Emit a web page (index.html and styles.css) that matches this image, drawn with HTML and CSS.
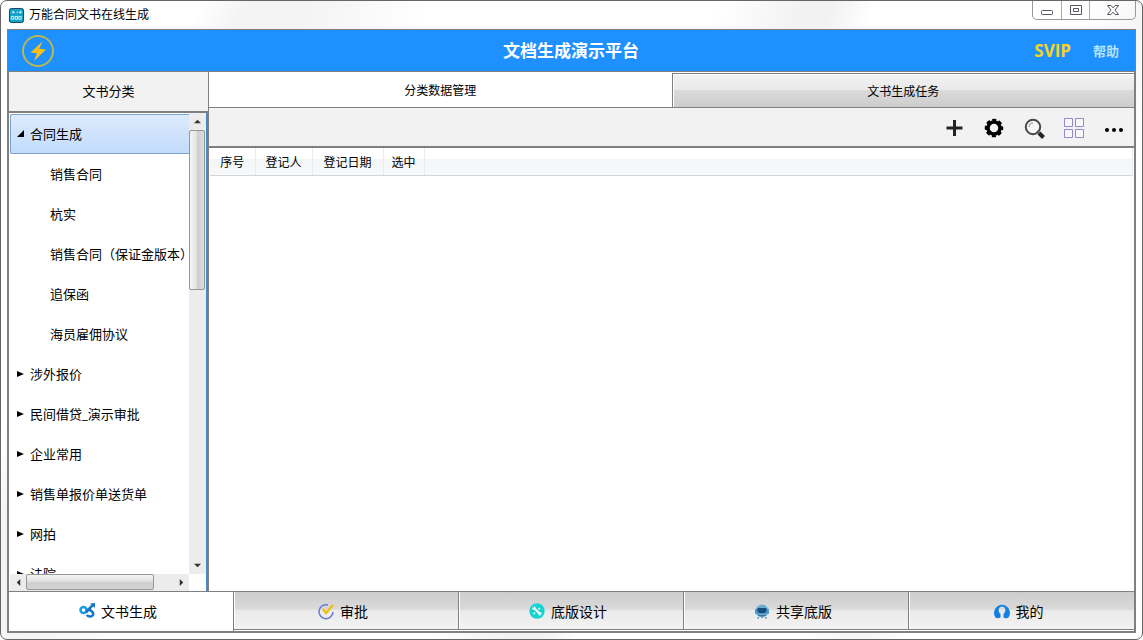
FILE: index.html
```html
<!DOCTYPE html>
<html lang="zh-CN">
<head>
<meta charset="utf-8">
<title>万能合同文书在线生成</title>
<link rel="stylesheet" href="styles.css">
</head>
<body>
<div class="window">
  <div class="titlebar">
    <svg class="app-icon" viewBox="0 0 16 16"><rect x=".5" y=".5" width="15" height="15" rx="2" fill="#12a0c8" stroke="#143f55"/><path d="M3 4.500h3M4.500 3v3M8 4.500h2M12 3v3M11 4.500h3" stroke="#d9f6ff"/><path d="M2.500 9h2.500v3h-2.500zM6.500 9h2.500v3h-2.500zM10.500 9h2.500v3h-2.500z" fill="none" stroke="#d9f6ff"/></svg>
    <span class="caption">万能合同文书在线生成</span>
    <div class="controls">
      <button class="control" aria-label="最小化"><svg viewBox="0 0 14 12"><rect x="1.500" y="6.500" width="11" height="4" rx="1" fill="#fff" stroke="#555663"/></svg></button>
      <button class="control" aria-label="最大化"><svg viewBox="0 0 14 12"><path d="M1.500 1.500h11v9h-11zM4.500 4.500h5v3h-5z" fill="#fff" stroke="#555663"/></svg></button>
      <button class="control control-close" aria-label="关闭"><svg viewBox="0 0 14 12"><path d="M1.500 1.500h3.500l2 2.300 2-2.300h3.500L9 6l3.500 4.500H9L7 8.200l-2 2.300H1.500L5 6z" fill="#fff" stroke="#555663"/></svg></button>
    </div>
  </div>
  <div class="client">
    <header class="banner">
      <svg class="bolt" viewBox="0 0 34 34"><circle cx="17" cy="17" r="15" fill="none" stroke="#b9b653" stroke-width="2"/><path d="M21.500 7.500 9.500 18.500l6.500.7-3 7.800 12-11.500-6.800-.8z" fill="#fbbf16"/></svg>
      <h1 class="banner-title">文档生成演示平台</h1>
      <a class="svip" href="#">SVIP</a>
      <a class="help" href="#">帮助</a>
    </header>
    <div class="body">
      <aside class="sidebar">
        <h2 class="sidebar-title">文书分类</h2>
        <div class="tree-pane">
          <ul class="tree">
            <li><button class="node selected"><svg class="arrow" viewBox="0 0 8 8"><path d="M7 1v7H0z"/></svg>合同生成</button>
              <ul class="children">
                <li><button class="node leaf">销售合同</button></li>
                <li><button class="node leaf">杭实</button></li>
                <li><button class="node leaf">销售合同（保证金版本）</button></li>
                <li><button class="node leaf">追保函</button></li>
                <li><button class="node leaf">海员雇佣协议</button></li>
              </ul>
            </li>
            <li><button class="node"><svg class="arrow" viewBox="0 0 8 8"><path d="M0 2l7 3-7 3z"/></svg>涉外报价</button></li>
            <li><button class="node"><svg class="arrow" viewBox="0 0 8 8"><path d="M0 2l7 3-7 3z"/></svg>民间借贷_演示审批</button></li>
            <li><button class="node"><svg class="arrow" viewBox="0 0 8 8"><path d="M0 2l7 3-7 3z"/></svg>企业常用</button></li>
            <li><button class="node"><svg class="arrow" viewBox="0 0 8 8"><path d="M0 2l7 3-7 3z"/></svg>销售单报价单送货单</button></li>
            <li><button class="node"><svg class="arrow" viewBox="0 0 8 8"><path d="M0 2l7 3-7 3z"/></svg>网拍</button></li>
            <li><button class="node"><svg class="arrow" viewBox="0 0 8 8"><path d="M0 2l7 3-7 3z"/></svg>法院</button></li>
          </ul>
          <div class="vbar">
            <button class="step" aria-label="向上滚动"><svg viewBox="0 0 8 8"><path d="M0 6l4-4 4 4z"/></svg></button>
            <div class="vtrack"><div class="vthumb"></div></div>
            <button class="step" aria-label="向下滚动"><svg viewBox="0 0 8 8"><path d="M0 2l4 4 4-4z"/></svg></button>
          </div>
          <div class="hbar">
            <button class="step" aria-label="向左滚动"><svg viewBox="0 0 8 8"><path d="M6 0L2 4l4 4z"/></svg></button>
            <div class="htrack"><div class="hthumb"></div></div>
            <button class="step" aria-label="向右滚动"><svg viewBox="0 0 8 8"><path d="M2 0l4 4-4 4z"/></svg></button>
          </div>
        </div>
      </aside>
      <main class="main">
        <div class="tabs" role="tablist">
          <button class="tab active" role="tab" aria-selected="true">分类数据管理</button>
          <button class="tab" role="tab" aria-selected="false">文书生成任务</button>
        </div>
        <div class="toolbar">
          <button class="tool" aria-label="新增"><svg viewBox="0 0 24 24"><path d="M12.500 4v16M4.500 12h16" stroke="#222" stroke-width="3"/></svg></button>
          <button class="tool" aria-label="设置"><svg viewBox="0 0 24 24"><circle cx="12" cy="12" r="6" fill="none" stroke="#000" stroke-width="3.500"/><circle cx="12" cy="12" r="8" fill="none" stroke="#000" stroke-width="2.500" stroke-dasharray="3.900 2.383" stroke-dashoffset="1.950"/></svg></button>
          <button class="tool" aria-label="搜索"><svg viewBox="0 0 24 24"><circle cx="11" cy="11" r="7.200" fill="#f8f8f8" stroke="#484848" stroke-width="2"/><path d="M7 11a4 4 0 0 1 4-4" fill="none" stroke="#aaa" stroke-width="1.500"/><path d="M15 15l2 2" stroke="#555" stroke-width="2"/><path d="M17 17l4.500 4.500" stroke="#222" stroke-width="4"/></svg></button>
          <button class="tool" aria-label="网格视图"><svg viewBox="0 0 24 24"><path d="M2.500 2.500h8v8h-8zM13.500 2.500h8v8h-8zM2.500 13.500h8v8h-8zM13.500 13.500h8v8h-8z" fill="#f8f6ff" stroke="#9488cf"/></svg></button>
          <button class="tool" aria-label="更多"><svg viewBox="0 0 24 24"><circle cx="5" cy="14" r="2"/><circle cx="12" cy="14" r="2"/><circle cx="19" cy="14" r="2"/></svg></button>
        </div>
        <div class="grid-pane">
          <table class="grid">
            <thead><tr><th class="col-no">序号</th><th class="col-user">登记人</th><th class="col-date">登记日期</th><th class="col-pick">选中</th><th></th></tr></thead>
          </table>
        </div>
      </main>
    </div>
    <nav class="nav">
      <button class="nav-item current"><svg viewBox="0 0 16 16"><g fill="none" stroke-width="2.500"><circle cx="4.500" cy="7" r="3" stroke="#1b9de0"/><path d="M7 9.500C9 8 11.500 4 14 2" stroke="#1577c8"/><path d="M8.500 5.500C10 7 14.500 8 14.200 11c-.3 3-5 3.500-6.200.8" stroke="#1577c8"/></g><path d="M11 .5L16 0v5z" fill="#1577c8"/></svg>文书生成</button>
      <button class="nav-item"><svg viewBox="0 0 16 16"><path d="M10 2A7 7 0 1 0 15 9" fill="none" stroke="#667bd2" stroke-width="1.500"/><path d="M5 6l3 4 7-8" fill="none" stroke="#f2bd16" stroke-width="2.500"/></svg>审批</button>
      <button class="nav-item"><svg viewBox="0 0 16 16"><circle cx="8" cy="8" r="7.700" fill="#16d2d0"/><path d="M5 5l6 6" stroke="#fff" stroke-width="2"/><circle cx="4.800" cy="5" r="1.800" fill="#fff"/><circle cx="11.200" cy="11" r="1.800" fill="#fff"/><path d="M3 3l1.800 1.800M11.500 11.300l2 2" stroke="#16d2d0" stroke-width="1.500"/><path d="M11 5l-1.500 1.500M6 9.500L4.500 11" stroke="#fff" stroke-width="1.500"/></svg>底版设计</button>
      <button class="nav-item"><svg viewBox="0 0 16 16"><circle cx="8" cy="8" r="6.500" fill="#6aa9d2" stroke="#a6cfe8" stroke-dasharray="2 1"/><rect x="1" y="6" width="14" height="5" rx="1" fill="#5199c9"/><path d="M3.500 5h9v3.500l-2 1.500h-5l-2-1.500z" fill="#164e7d"/><path d="M4 12.500h8M4 14v2M8 13v2M12 14v2" stroke="#397ba8"/></svg>共享底版</button>
      <button class="nav-item"><svg viewBox="0 0 16 16"><path d="M1.500 14.500A8 8 0 1 1 14.500 14.500C13 15.500 11 15.300 9.500 14.500V11c3-2.500 2.300-7.500-1.500-7.500S3.500 8.500 6.500 11v3.500c-1.500.8-3.500 1-5 0z" fill="#117fe4"/></svg>我的</button>
    </nav>
  </div>
</div>
</body>
</html>
```
FILE: styles.css
```css
* { box-sizing: border-box; }

body {
  margin: 0;
  background: #fff;
  color: #000;
  font-family: "Noto Sans", "Noto Sans CJK SC", sans-serif;
  font-size: 13px;
}

button {
  margin: 0;
  padding: 0;
  border: 0;
  background: none;
  color: inherit;
  font: inherit;
}

h1, h2, ul { margin: 0; padding: 0; }
ul { list-style: none; }
svg { display: block; flex: none; overflow: visible; }

.window {
  display: flex;
  flex-direction: column;
  height: 100vh;
  padding: 0 6px 6px;
  border: 1px solid #666;
  border-radius: 7px;
  background: linear-gradient(115deg, #fff 0 14%, #f4f4f4 17% 22%, #fff 30% 50%, #f2f2f2 56% 58%, #fff 61% 76%, #f5f5f5 80%, #fff 84%);
}

.titlebar {
  display: flex;
  align-items: center;
  gap: 5px;
  height: 28px;
  padding-left: 2px;
}

.app-icon { width: 15px; height: 15px; }
.caption { flex: 1; font-size: 12px; line-height: 18px; }

.controls {
  display: flex;
  align-self: flex-start;
  height: 19px;
  border: 1px solid #999;
  border-top: 0;
  border-radius: 0 0 5px 5px;
}

.control {
  display: grid;
  place-items: center;
  width: 28px;
}

.control + .control { border-left: 1px solid #aaa; }
.control svg { width: 14px; height: 12px; }
.control.control-close { width: 46px; }

.client {
  display: flex;
  flex: 1;
  flex-direction: column;
  min-height: 0;
  border: 2px solid #808080;
  border-top-width: 1px;
  background: #fff;
}

.banner {
  display: grid;
  grid-template-columns: 1fr auto 1fr auto;
  align-items: center;
  height: 42px;
  margin: 0 -1px;
  padding: 0 16px 0 13px;
  border-bottom: 1px solid #808080;
  background: #1e90ff;
}

.bolt { width: 34px; height: 34px; }
.banner-title { padding-left: 28px; color: #fff; font-size: 17px; line-height: 24px; }

.svip, .help { font-weight: bold; text-decoration: none; }

.svip {
  justify-self: end;
  margin-right: 22px;
  color: #f5d51c;
  font-family: "Open Sans", sans-serif;
  font-size: 17px;
  line-height: 24px;
}

.help { color: #b5e1fa; font-size: 13px; }

.body { display: flex; flex: 1; min-height: 0; }

.sidebar {
  display: flex;
  flex: none;
  flex-direction: column;
  width: 200px;
  border-right: 1px solid #808080;
}

.sidebar-title {
  height: 41px;
  border-bottom: 2px solid #808080;
  background: #f2f2f2;
  font-size: 13px;
  font-weight: normal;
  line-height: 38px;
  text-align: center;
}

.tree-pane {
  display: grid;
  flex: 1;
  grid-template: minmax(0, 1fr) 17px / minmax(0, 1fr) 17px;
  min-height: 0;
  padding-left: 1px;
  border-right: 2px solid #4a88c4;
}

.tree { overflow: hidden; padding-top: 1px; }

.node {
  display: flex;
  align-items: center;
  gap: 5px;
  width: 100%;
  height: 40px;
  padding: 0 0 2px 7px;
  white-space: nowrap;
}

.node.leaf { padding-left: 40px; }

.node.selected {
  padding-left: 6px;
  border: 1px solid #7da2ce;
  border-right: 0;
  border-radius: 2px 0 0 2px;
  background: linear-gradient(#dceafd, #c2dcfc);
}

.arrow { width: 8px; height: 8px; }

.vbar { display: flex; flex-direction: column; background: #ececec; }
.hbar { display: flex; background: #ececec; }
.step { display: grid; flex: none; place-items: center; width: 16px; height: 17px; }
.step svg { width: 7px; height: 7px; fill: #333; }
.vtrack, .htrack { flex: 1; }
.vthumb, .hthumb { border: 1px solid #969696; border-radius: 2px; }

.vthumb {
  width: 16px;
  height: 160px;
  background: linear-gradient(90deg, #f5f5f5, #e4e4e6 45%, #cdcdd1 55%, #dedee0);
}

.hthumb {
  width: 128px;
  height: 16px;
  background: linear-gradient(#f5f5f5, #e2e2e4 45%, #cdcdd1 55%, #d4d4d6);
}

.main { display: flex; flex: 1; flex-direction: column; min-width: 0; background: #fff; }

.tabs { display: grid; grid-template-columns: 1fr 1fr; height: 36px; border-bottom: 1px solid #808080; }

.tab {
  margin-top: 1px;
  border: solid #808080;
  border-width: 1px 0 0 1px;
  background: linear-gradient(#f2f2f2, #e9e9e9 50%, #dadada 50%, #cdcdcd);
  box-shadow: inset 1px 1px #fff;
  font-size: 12px;
}

.tab.active { margin-top: 0; border: 0; background: #fff; }

.toolbar {
  display: flex;
  align-items: center;
  justify-content: flex-end;
  gap: 16px;
  height: 40px;
  padding: 2px 8px 0 0;
  border-bottom: 2px solid #808080;
  background: #f2f2f2;
}

.tool svg { width: 24px; height: 24px; }

.grid-pane { flex: 1; padding: 0 1px; }
.grid { width: 100%; border-collapse: collapse; table-layout: fixed; }

.grid th {
  height: 27px;
  padding: 2px 0 0;
  border-right: 1px solid #e8ecf0;
  border-bottom: 1px solid #d5d5d5;
  background: linear-gradient(#fff 40%, #f4f5f7 41%, #f7f8fa);
  font-size: 12px;
  font-weight: normal;
}

.col-no { width: 45px; }
.col-user { width: 57px; }
.col-date { width: 71px; }
.col-pick { width: 41px; }

.nav {
  display: grid;
  flex: none;
  grid-template-columns: repeat(5, 1fr);
  height: 40px;
  border-top: 1px solid #808080;
}

.nav-item {
  display: flex;
  align-items: center;
  justify-content: center;
  gap: 6px;
  margin-bottom: 1px;
  padding-right: 6px;
  border-right: 1px solid #808080;
  border-bottom: 1px solid #808080;
  background: linear-gradient(#cdcdcd, #dadada 47%, #e9e9e9 48%, #f3f3f3);
  box-shadow: inset 1px 0 #fff;
  font-size: 14px;
}

.nav-item svg { width: 16px; height: 16px; }
.nav-item.current { margin-bottom: 0; padding-bottom: 2px; border-bottom: 0; background: #fff; }
.nav-item:last-child { border-right: 0; }
```
